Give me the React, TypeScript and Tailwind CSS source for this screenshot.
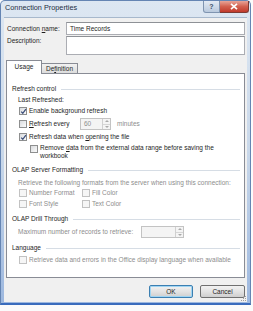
import React from 'react';

const font = { fontFamily: '"Liberation Sans", Arial, sans-serif' };

function Check({ checked = false, disabled = false }: { checked?: boolean; disabled?: boolean }) {
  return (
    <span
      className={`relative flex h-[8px] w-[8px] shrink-0 items-center justify-center border ${
        disabled ? 'border-[#c2c2c2] bg-[#f6f6f6]' : 'border-[#8e8f8f] bg-gradient-to-br from-[#d9dbde] to-[#fbfbfb]'
      }`}
    >
      {checked && (
        <svg width="7" height="7" viewBox="0 0 7 7" className="absolute">
          <path d="M1.2 3.6 L2.8 5.3 L5.9 1.2" fill="none" stroke="#3c4f7a" strokeWidth="1.3" />
        </svg>
      )}
    </span>
  );
}

function Group({ title }: { title: string }) {
  return (
    <div className="flex h-[10px] items-center pl-[5px] pr-[4px] text-[#1e1e1e]">
      <span className="whitespace-nowrap">{title}</span>
      <span className="ml-[5px] h-px flex-1 bg-[#d6dde5]" />
    </div>
  );
}

function Spinner({ w, value }: { w: string; value?: string }) {
  return (
    <div className={`flex h-[12px] ${w} border border-[#c3c3c3] bg-[#f4f4f4]`}>
      <span className="flex-1 pl-[3px] leading-[10px] text-[#8d8d8d]">{value}</span>
      <div className="flex w-[8px] flex-col border-l border-[#d0d0d0]">
        <div className="flex flex-1 items-center justify-center border-b border-[#d6d6d6]">
          <svg width="4" height="2" viewBox="0 0 4 2"><path d="M0 2 L2 0 L4 2Z" fill="#a9a9a9" /></svg>
        </div>
        <div className="flex flex-1 items-center justify-center">
          <svg width="4" height="2" viewBox="0 0 4 2"><path d="M0 0 L2 2 L4 0Z" fill="#a9a9a9" /></svg>
        </div>
      </div>
    </div>
  );
}

export default function App() {
  return (
    <div className="h-[311px] w-[253px] overflow-hidden bg-[#fbfbfb] text-[6.5px] leading-[10px]" style={font}>
      <div className="flex h-[305px] w-[251px] flex-col rounded-t-[5px] border border-b-2 border-[#6585b3] border-b-[#3a6cbd] bg-gradient-to-b from-[#dde7f2] via-[#c9d8ea] to-[#9db8df]">
        {/* title bar */}
        <div className="flex h-[16px] shrink-0 items-start">
          <span className="flex-1 pl-[4px] pt-[2px] text-[7.3px] leading-[10px] text-[#1f2f44]">Connection Properties</span>
          <div className="mr-[1px] flex">
            <div className="flex h-[12px] w-[17px] items-center justify-center rounded-bl-[3px] border border-t-0 border-[#7f94b0] bg-gradient-to-b from-[#e3eaf3] to-[#b9c9dd] text-[7px] font-bold text-[#3d4f66]">
              ?
            </div>
            <div className="flex h-[12px] w-[29px] items-center justify-center rounded-br-[3px] border border-l-0 border-t-0 border-[#7d3a33] bg-gradient-to-b from-[#e7a499] via-[#d2604f] to-[#c0392b]">
              <svg width="8" height="7" viewBox="0 0 8 7">
                <path d="M1 0.8 L7 6.2 M7 0.8 L1 6.2" stroke="#ffffff" strokeWidth="1.7" />
              </svg>
            </div>
          </div>
        </div>

        {/* client area */}
        <div className="relative mx-[3px] mb-[1px] flex flex-1 flex-col border-t border-[#a7b8cc] bg-[#f0f0f0] px-[2px] text-[#1e1e1e]">
          <div className="mt-[4px] flex h-[13px]">
            <span className="w-[60px] pl-[1px] leading-[13px]">
              Connection <u>n</u>ame:
            </span>
            <div className="flex-1 border border-[#abadb3] border-t-[#8e9196] bg-white pl-[3px] leading-[11px]">Time Records</div>
          </div>
          <div className="mt-[1px] flex h-[19px]">
            <span className="w-[60px] pl-[1px] leading-[10px]">Description:</span>
            <div className="flex-1 border border-[#abadb3] border-t-[#8e9196] bg-white" />
          </div>

          {/* tabs */}
          <div className="mt-[6px] flex h-[12px] items-end">
            <div className="relative z-10 mb-[-1px] flex h-[14px] w-[36px] items-start justify-center border border-b-0 border-[#898c95] bg-white pt-[1px]">
              Usage
            </div>
            <div className="flex h-[10px] w-[36px] items-center justify-center border border-b-0 border-l-0 border-[#898c95] bg-gradient-to-b from-[#f2f2f2] to-[#dcdcdc]">
              De<u>f</u>inition
            </div>
          </div>
          <div className="flex h-[205px] flex-col border border-[#898c95] bg-white">
            <div className="mt-[10px]">
              <Group title="Refresh control" />
            </div>
            <div className="mt-[1px] flex h-[10px] items-center pl-[11px]">Last Refreshed:</div>
            <div className="mt-[1px] flex h-[10px] items-center pl-[12px]">
              <Check checked />
              <span className="ml-[2px]">Enable background refresh</span>
            </div>
            <div className="mt-[2px] flex h-[12px] items-center pl-[12px]">
              <Check />
              <span className="ml-[2px] w-[51px]">
                <u>R</u>efresh every
              </span>
              <Spinner w="w-[31px]" value="60" />
              <span className="ml-[6px] text-[#8d8d8d]">minutes</span>
            </div>
            <div className="mt-[2px] flex h-[10px] items-center pl-[12px]">
              <Check checked />
              <span className="ml-[2px]">
                Refresh data when <u>o</u>pening the file
              </span>
            </div>
            <div className="mt-[2px] flex h-[16px] items-start pl-[23px]">
              <span className="mt-[1px]">
                <Check />
              </span>
              <div className="ml-[2px] flex flex-col">
                <span className="h-[8px] whitespace-nowrap leading-[8px]">
                  Remove <u>d</u>ata from the external data range before saving the
                </span>
                <span className="h-[8px] leading-[8px]">workbook</span>
              </div>
            </div>

            <div className="mt-[5px]">
              <Group title="OLAP Server Formatting" />
            </div>
            <div className="mt-[3px] flex h-[10px] items-center pl-[11px] text-[#8d8d8d]">
              Retrieve the following formats from the server when using this connection:
            </div>
            <div className="flex h-[10px] items-center pl-[12px] text-[#8d8d8d]">
              <span className="flex w-[63px] items-center">
                <Check disabled />
                <span className="ml-[2px]">Number Format</span>
              </span>
              <Check disabled />
              <span className="ml-[2px]">Fill Color</span>
            </div>
            <div className="mt-[1px] flex h-[10px] items-center pl-[12px] text-[#8d8d8d]">
              <span className="flex w-[63px] items-center">
                <Check disabled />
                <span className="ml-[2px]">Font Style</span>
              </span>
              <Check disabled />
              <span className="ml-[2px]">Text Color</span>
            </div>

            <div className="mt-[5px]">
              <Group title="OLAP Drill Through" />
            </div>
            <div className="mt-[2px] flex h-[12px] items-center pl-[11px] text-[#8d8d8d]">
              <span className="w-[123px]">Maximum number of records to retrieve:</span>
              <Spinner w="w-[43px]" />
            </div>

            <div className="mt-[5px]">
              <Group title="Language" />
            </div>
            <div className="mt-[2px] flex h-[10px] items-center pl-[12px] text-[#8d8d8d]">
              <Check disabled />
              <span className="ml-[2px] whitespace-nowrap">
                Retrieve data and errors in the Office display language when available
              </span>
            </div>
          </div>

          {/* buttons */}
          <div className="mt-[7px] flex h-[13px] justify-end gap-[7px]">
            <button className="h-[13px] w-[44px] rounded-[2px] border border-[#3c7fb1] bg-gradient-to-b from-[#f2f2f2] via-[#e3e3e3] to-[#cfcfcf] text-[6.5px] leading-[10px] text-[#1e1e1e] shadow-[inset_0_0_0_1px_#9fd5f3]">
              OK
            </button>
            <button className="h-[13px] w-[45px] rounded-[2px] border border-[#707070] bg-gradient-to-b from-[#f2f2f2] via-[#e3e3e3] to-[#cfcfcf] text-[6.5px] leading-[10px] text-[#1e1e1e]">
              Cancel
            </button>
          </div>

          <svg width="6" height="6" viewBox="0 0 6 6" className="absolute bottom-0 right-0">
            <rect x="4" y="0" width="1" height="1" fill="#a0a0a0" />
            <rect x="2" y="2" width="1" height="1" fill="#a0a0a0" />
            <rect x="4" y="2" width="1" height="1" fill="#a0a0a0" />
            <rect x="0" y="4" width="1" height="1" fill="#a0a0a0" />
            <rect x="2" y="4" width="1" height="1" fill="#a0a0a0" />
            <rect x="4" y="4" width="1" height="1" fill="#a0a0a0" />
          </svg>
        </div>
      </div>
    </div>
  );
}
